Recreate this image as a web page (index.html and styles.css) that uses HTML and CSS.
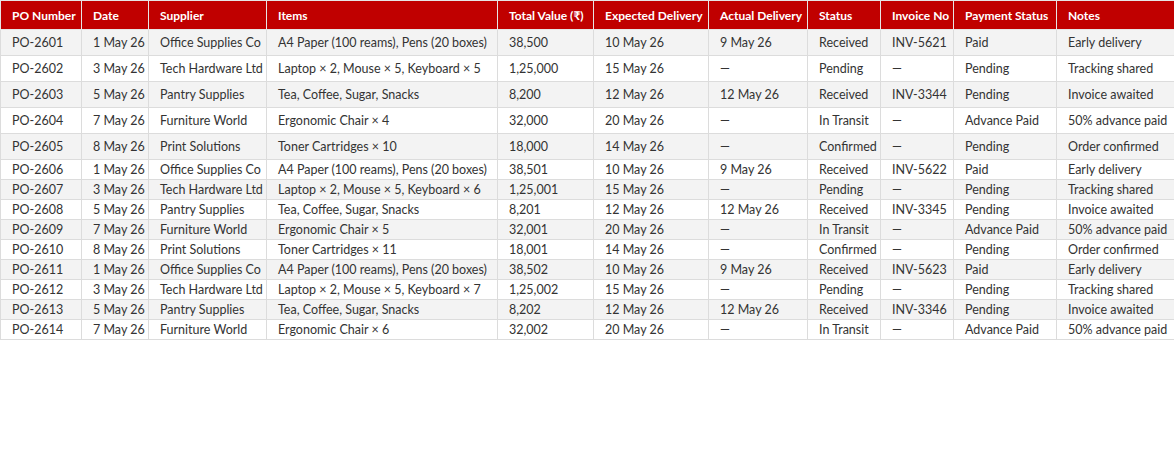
FILE: index.html
```html
<!DOCTYPE html>
<html lang="en">
<head>
<meta charset="utf-8">
<title>Purchase Orders</title>
<link rel="stylesheet" href="styles.css">
</head>
<body>
<table class="po-table">
  <colgroup>
    <col class="c1"><col class="c2"><col class="c3"><col class="c4"><col class="c5"><col class="c6"><col class="c7"><col class="c8"><col class="c9"><col class="c10"><col class="c11">
  </colgroup>
  <thead>
    <tr>
      <th>PO Number</th><th>Date</th><th>Supplier</th><th>Items</th><th>Total Value (₹)</th><th>Expected Delivery</th><th>Actual Delivery</th><th>Status</th><th>Invoice No</th><th>Payment Status</th><th>Notes</th>
    </tr>
  </thead>
  <tbody>
    <tr class="tall"><td>PO-2601</td><td>1 May 26</td><td>Office Supplies Co</td><td>A4 Paper (100 reams), Pens (20 boxes)</td><td>38,500</td><td>10 May 26</td><td>9 May 26</td><td>Received</td><td>INV-5621</td><td>Paid</td><td>Early delivery</td></tr>
    <tr class="tall"><td>PO-2602</td><td>3 May 26</td><td>Tech Hardware Ltd</td><td>Laptop × 2, Mouse × 5, Keyboard × 5</td><td>1,25,000</td><td>15 May 26</td><td>—</td><td>Pending</td><td>—</td><td>Pending</td><td>Tracking shared</td></tr>
    <tr class="tall"><td>PO-2603</td><td>5 May 26</td><td>Pantry Supplies</td><td>Tea, Coffee, Sugar, Snacks</td><td>8,200</td><td>12 May 26</td><td>12 May 26</td><td>Received</td><td>INV-3344</td><td>Pending</td><td>Invoice awaited</td></tr>
    <tr class="tall"><td>PO-2604</td><td>7 May 26</td><td>Furniture World</td><td>Ergonomic Chair × 4</td><td>32,000</td><td>20 May 26</td><td>—</td><td>In Transit</td><td>—</td><td>Advance Paid</td><td>50% advance paid</td></tr>
    <tr class="tall"><td>PO-2605</td><td>8 May 26</td><td>Print Solutions</td><td>Toner Cartridges × 10</td><td>18,000</td><td>14 May 26</td><td>—</td><td>Confirmed</td><td>—</td><td>Pending</td><td>Order confirmed</td></tr>
    <tr><td>PO-2606</td><td>1 May 26</td><td>Office Supplies Co</td><td>A4 Paper (100 reams), Pens (20 boxes)</td><td>38,501</td><td>10 May 26</td><td>9 May 26</td><td>Received</td><td>INV-5622</td><td>Paid</td><td>Early delivery</td></tr>
    <tr><td>PO-2607</td><td>3 May 26</td><td>Tech Hardware Ltd</td><td>Laptop × 2, Mouse × 5, Keyboard × 6</td><td>1,25,001</td><td>15 May 26</td><td>—</td><td>Pending</td><td>—</td><td>Pending</td><td>Tracking shared</td></tr>
    <tr><td>PO-2608</td><td>5 May 26</td><td>Pantry Supplies</td><td>Tea, Coffee, Sugar, Snacks</td><td>8,201</td><td>12 May 26</td><td>12 May 26</td><td>Received</td><td>INV-3345</td><td>Pending</td><td>Invoice awaited</td></tr>
    <tr><td>PO-2609</td><td>7 May 26</td><td>Furniture World</td><td>Ergonomic Chair × 5</td><td>32,001</td><td>20 May 26</td><td>—</td><td>In Transit</td><td>—</td><td>Advance Paid</td><td>50% advance paid</td></tr>
    <tr><td>PO-2610</td><td>8 May 26</td><td>Print Solutions</td><td>Toner Cartridges × 11</td><td>18,001</td><td>14 May 26</td><td>—</td><td>Confirmed</td><td>—</td><td>Pending</td><td>Order confirmed</td></tr>
    <tr><td>PO-2611</td><td>1 May 26</td><td>Office Supplies Co</td><td>A4 Paper (100 reams), Pens (20 boxes)</td><td>38,502</td><td>10 May 26</td><td>9 May 26</td><td>Received</td><td>INV-5623</td><td>Paid</td><td>Early delivery</td></tr>
    <tr><td>PO-2612</td><td>3 May 26</td><td>Tech Hardware Ltd</td><td>Laptop × 2, Mouse × 5, Keyboard × 7</td><td>1,25,002</td><td>15 May 26</td><td>—</td><td>Pending</td><td>—</td><td>Pending</td><td>Tracking shared</td></tr>
    <tr><td>PO-2613</td><td>5 May 26</td><td>Pantry Supplies</td><td>Tea, Coffee, Sugar, Snacks</td><td>8,202</td><td>12 May 26</td><td>12 May 26</td><td>Received</td><td>INV-3346</td><td>Pending</td><td>Invoice awaited</td></tr>
    <tr><td>PO-2614</td><td>7 May 26</td><td>Furniture World</td><td>Ergonomic Chair × 6</td><td>32,002</td><td>20 May 26</td><td>—</td><td>In Transit</td><td>—</td><td>Advance Paid</td><td>50% advance paid</td></tr>
  </tbody>
</table>
</body>
</html>
```
FILE: styles.css
```css
html, body {
  margin: 0;
  padding: 0;
  background: #ffffff;
}

.po-table {
  border-collapse: collapse;
  table-layout: fixed;
  width: 1174px;
  font-family: Lato, "Open Sans", sans-serif;
  font-size: 12.5px;
  color: #333333;
}

.c1 { width: 81px; }
.c2 { width: 67px; }
.c3 { width: 118px; }
.c4 { width: 231px; }
.c5 { width: 96px; }
.c6 { width: 115px; }
.c7 { width: 99px; }
.c8 { width: 73px; }
.c9 { width: 73px; }
.c10 { width: 103px; }
.c11 { width: 118px; }

.po-table th,
.po-table td {
  border: 1px solid #dcdcdc;
  padding: 0 0 0 11px;
  text-align: left;
  white-space: nowrap;
  overflow: visible;
  vertical-align: middle;
}

.po-table th {
  background: #c00000;
  color: #ffffff;
  font-weight: 700;
  font-size: 12px;
  height: 28px;
  border-color: #e6e6e6;
}

.po-table td {
  height: 19px;
}

.po-table tr.tall td {
  height: 25px;
}

.po-table tbody tr:nth-child(odd) td {
  background: #f3f3f3;
}
```
